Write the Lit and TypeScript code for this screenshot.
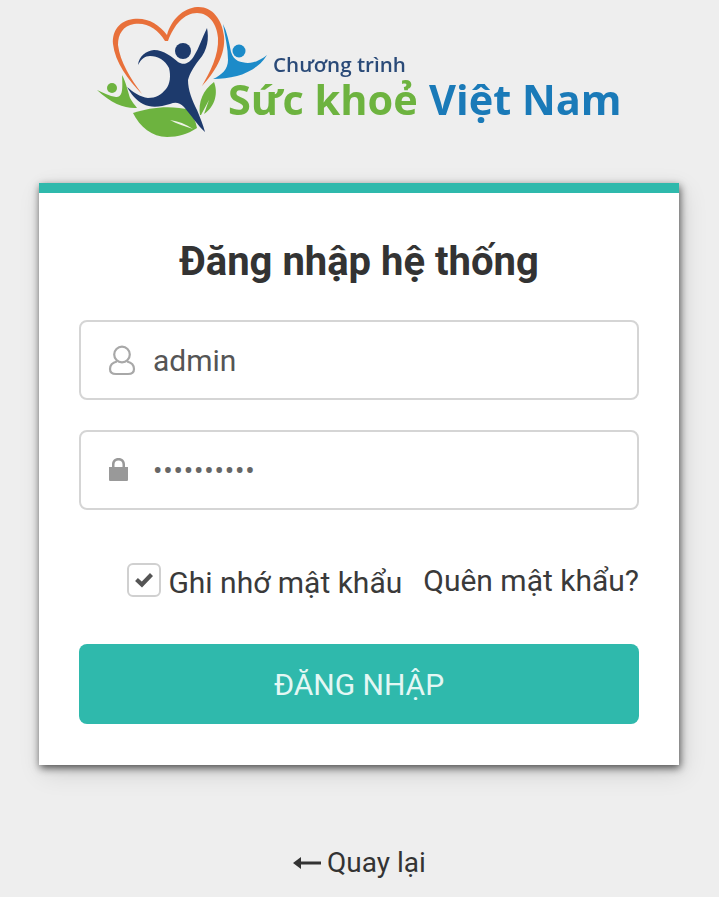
import { LitElement, html, css, svg } from "lit";
import { customElement } from "lit/decorators.js";

const logo = svg`
  <path fill="#e8703a" d="M142 94C128 80 115 62 113 44C112 30 120 21 133 19C147 17 159 24 167 35C171 20 183 8 197 7C212 6 222 19 224 36C226 55 214 73 202 86C210 72 219 55 218 38C217 24 209 13 197 13C184 13 174 25 168 41L165 41C158 29 147 22 134 24C123 26 118 34 118 45C120 62 131 79 142 94Z"/>
  <path fill="#1c8bc9" d="M223 24C227 32 229 42 231 52C234 62 241 62 248 63C255 63 262 59 267 55C260 67 247 73 237 76C229 78 221 79 213 79C222 75 228 69 228 60C228 48 225 36 223 24Z"/>
  <circle cx="239" cy="51" r="6.5" fill="#1c8bc9"/>
  <path fill="#6db33f" d="M97 90C104 93 109 96 116 97C122 97 123 92 122 75C126 82 128 92 130 98C132 102 135 105 137 108C126 109 112 104 97 90Z"/>
  <circle cx="112" cy="88" r="5" fill="#6db33f"/>
  <path fill="#6db33f" d="M133 113C150 107 172 105 190 110C193 116 196 122 197 128C188 134 178 137 167 137C152 137 140 127 133 113Z"/>
  <path fill="#eef3e6" d="M170 120C178 121 186 124 193 129C185 126 177 124 170 120Z"/>
  <path fill="#6db33f" d="M200 115C198 102 203 90 214 82C218 92 216 106 204 114L209 100L201 115Z"/>
  <path fill="#1d3a6c" d="M207 28C209 38 208 50 199 60C193 68 190 73 188 80C188 90 192 100 197 110C200 117 203 125 205 132C198 126 191 115 184 107C179 102 175 102 170 104C160 107 151 108 143 104C136 100 131 94 127 87C133 92 140 97 148 98C156 98 161 95 166 89C170 84 171 76 169 68C165 60 158 56 150 56C145 56 141 59 138 65C139 56 146 51 154 50C164 50 172 57 178 62C184 66 190 63 194 56C199 48 202 38 207 28Z"/>
  <circle cx="183" cy="51" r="8" fill="#1d3a6c"/>
  <text class="sub" x="273" y="72">Chương trình</text>
  <text class="big green" x="228" y="115">Sức khoẻ</text>
  <text class="big blue" x="429" y="115">Việt Nam</text>
`;

@customElement("app-root")
export class AppRoot extends LitElement {
  static styles = css`
    :host {
      display: block;
      height: 897px;
      overflow: hidden;
      background-color: #eeeeee;
      font-family: Roboto, "Liberation Sans", sans-serif;
      color: #333;
    }
    .logo {
      display: block;
      width: 719px;
      height: 183px;
      filter: blur(0.4px);
    }
    .logo .sub {
      font: 600 20.6px "Open Sans", sans-serif;
      fill: #2a4a78;
    }
    .logo .big {
      font: 700 41.5px "Open Sans", sans-serif;
    }
    .logo .green {
      fill: #6db33f;
    }
    .logo .blue {
      fill: #1a7ab8;
    }
    .card {
      width: 640px;
      height: 582px;
      box-sizing: border-box;
      margin-left: 39px;
      padding: 0 40px;
      display: flex;
      flex-direction: column;
      background-color: #fff;
      border-top: 10px solid #2fb9ac;
      box-shadow: 1px 3px 8px rgba(0, 0, 0, 0.65), 4px 8px 24px rgba(0, 0, 0, 0.12);
    }
    h1 {
      margin: 45px 0 35px;
      font-size: 40px;
      line-height: 47px;
      font-weight: 700;
      text-align: center;
    }
    .field {
      height: 80px;
      box-sizing: border-box;
      display: flex;
      align-items: center;
      gap: 17px;
      padding-left: 27px;
      border: 2px solid #d5d5d5;
      border-radius: 8px;
      margin-bottom: 30px;
      font-size: 30px;
      color: #555;
    }
    .field svg {
      width: 28px;
      height: 32px;
      flex: none;
    }
    .dots {
      font-size: 28px;
      letter-spacing: 0.8px;
      color: #666;
    }
    .options {
      display: flex;
      justify-content: flex-end;
      align-items: center;
      gap: 21px;
      margin-top: 22px;
      height: 40px;
      font-size: 30px;
      color: #3a3a3a;
    }
    .remember {
      display: flex;
      align-items: center;
      gap: 7px;
    }
    .forgot {
      margin-bottom: 3px;
    }
    .check {
      width: 34px;
      height: 34px;
      box-sizing: border-box;
      margin-bottom: 5px;
      border: 2px solid #d0d0d0;
      border-radius: 6px;
      display: flex;
      align-items: center;
      justify-content: center;
    }
    .check svg {
      width: 20px;
      height: 17px;
    }
    .submit {
      margin-top: 42px;
      height: 80px;
      border-radius: 8px;
      background-color: #2fb9ac;
      color: #e4f7f4;
      font-size: 30px;
      display: flex;
      align-items: center;
      justify-content: center;
    }
    .back {
      margin-top: 76px;
      display: flex;
      justify-content: center;
      align-items: center;
      gap: 6px;
      font-size: 28px;
      line-height: 44px;
    }
    .back svg {
      width: 28px;
      height: 14px;
    }
  `;

  protected render() {
    return html`
      <svg class="logo" viewBox="0 0 719 183">${logo}</svg>
      <div class="card">
        <h1>Đăng nhập hệ thống</h1>
        <div class="field">
          <svg viewBox="0 0 28 32" fill="none" stroke="#a8a8a8" stroke-width="2.2">
            <circle cx="14" cy="10.500" r="7.800" />
            <path d="M9 17.500C4.500 18.500 2 21.500 2 25C2 28.500 4 30 8 30H20C24 30 26 28.500 26 25C26 21.500 23.500 18.500 19 17.500" />
          </svg>
          <span>admin</span>
        </div>
        <div class="field">
          <svg viewBox="0 0 28 32" fill="#999">
            <path d="M1 13H4V10.500C4 6.500 6.500 4 10.500 4C14.500 4 17 6.500 17 10.500V13H20V25.500C20 26.500 19.500 27 18.500 27H2.500C1.500 27 1 26.500 1 25.500ZM6.500 13H14.500V10.500C14.500 8 13 6.500 10.500 6.500C8 6.500 6.500 8 6.500 10.500Z" />
          </svg>
          <span class="dots">••••••••••</span>
        </div>
        <div class="options">
          <div class="remember">
            <span class="check">
              <svg viewBox="0 0 24 20" fill="none" stroke="#555" stroke-width="5">
                <path d="M3 10L9.500 16L21 4" />
              </svg>
            </span>
            <span>Ghi nhớ mật khẩu</span>
          </div>
          <span class="forgot">Quên mật khẩu?</span>
        </div>
        <div class="submit">ĐĂNG NHẬP</div>
      </div>
      <div class="back">
        <svg viewBox="0 0 28 14" fill="#333">
          <path d="M0 7L8 1V5.500H28V8.500H8V13Z" />
        </svg>
        <span>Quay lại</span>
      </div>
    `;
  }
}

declare global {
  interface HTMLElementTagNameMap {
    "app-root": AppRoot;
  }
}
